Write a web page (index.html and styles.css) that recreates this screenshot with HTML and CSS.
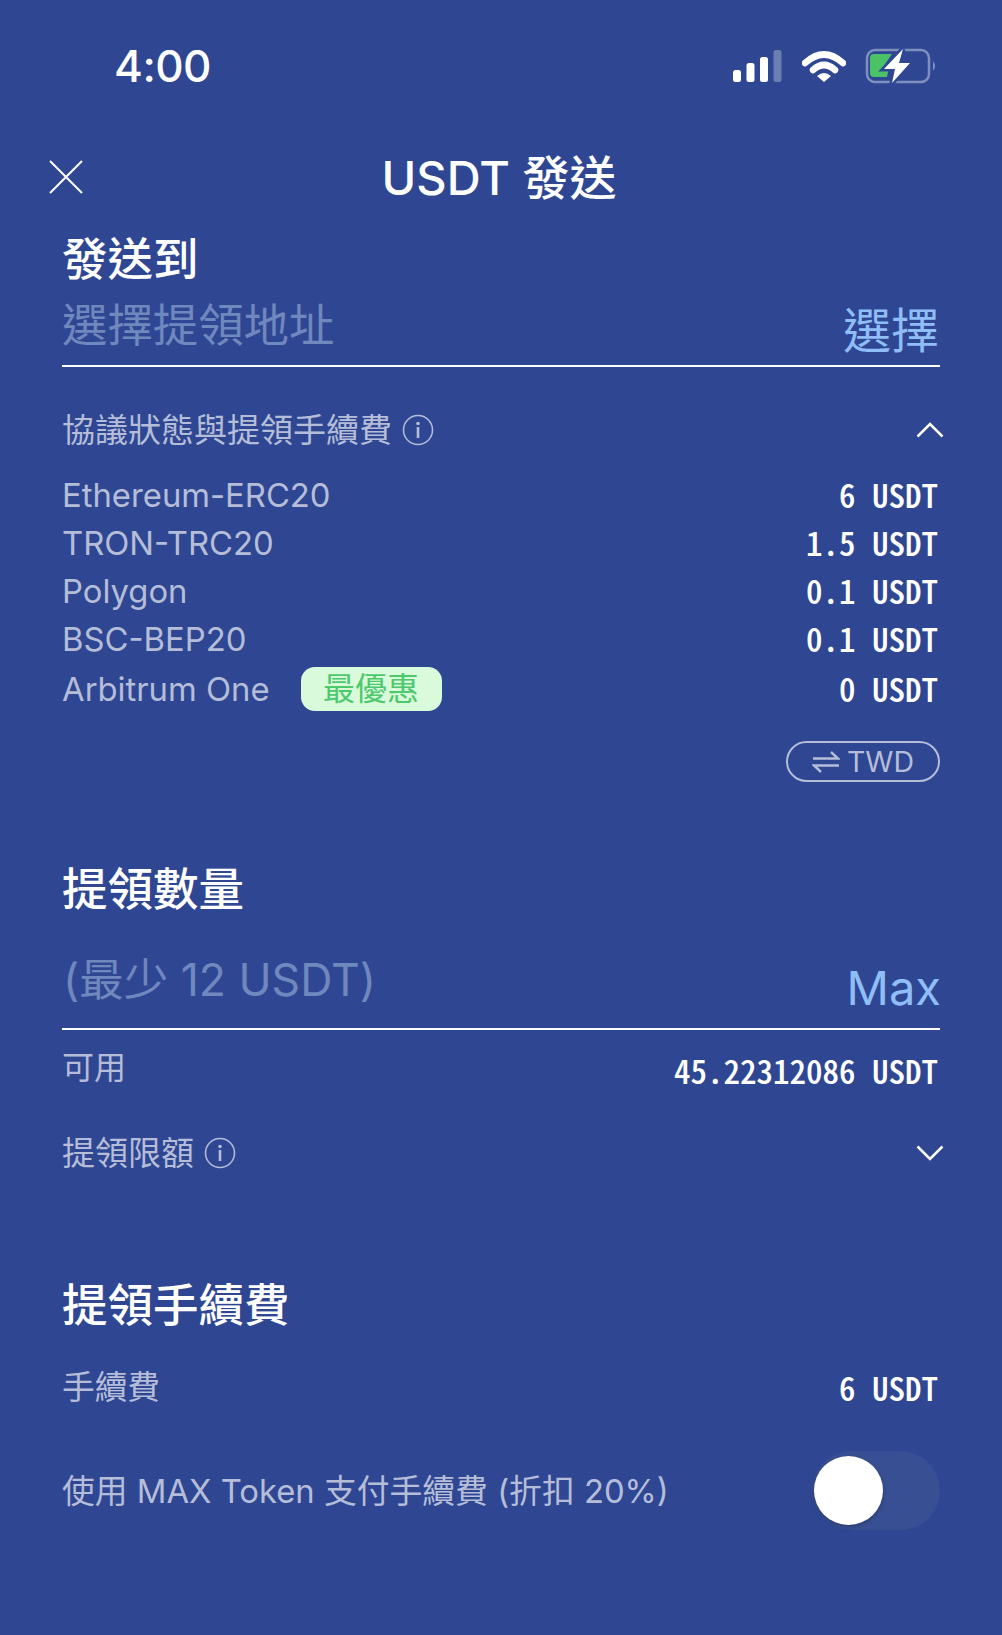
FILE: index.html
```
<!DOCTYPE html>
<html lang="zh-Hant">
<head>
<meta charset="utf-8">
<title>USDT 發送</title>
<link rel="stylesheet" href="styles.css">
</head>
<body>
<div class="screen">
  <header class="status">
    <span class="time">4:00</span>
    <div class="status-icons">
      <svg class="ic-signal" viewBox="0 0 50 32"><rect x="0" y="20" width="8" height="12" rx="2.5" fill="#fff"/><rect x="13.500" y="13" width="8" height="19" rx="2.500" fill="#fff"/><rect x="27" y="7" width="8" height="25" rx="2.500" fill="#fff"/><rect x="40.500" y="0" width="8" height="32" rx="2.500" fill="#6b7fb3"/></svg>
      <svg class="ic-wifi" viewBox="0 0 44 32"><path d="M3 13 Q22 -4 41 13" fill="none" stroke="#fff" stroke-width="6.500" stroke-linecap="round"/><path d="M11 20 Q22 10 33 20" fill="none" stroke="#fff" stroke-width="6.500" stroke-linecap="round"/><path d="M15 26 Q22 20 29 26 L22 32Z" fill="#fff"/></svg>
      <svg class="ic-battery" viewBox="0 0 72 36"><rect x="2" y="2" width="62" height="32" rx="8" fill="none" stroke="#7f90bf" stroke-width="2.500"/><path d="M68 13 Q72 18 68 23Z" fill="#7f90bf"/><path d="M5 10 Q5 6 9 6 H27 L18 19 H24 L22 29 H9 Q5 29 5 25Z" fill="#4cc266"/><path d="M38 1 L19 21 H30 L27 35 L45 15 H34Z" fill="#fff" stroke="#2f4793" stroke-width="5" paint-order="stroke"/></svg>
    </div>
  </header>

  <div class="nav">
    <svg class="ic-close" viewBox="0 0 34 34"><path d="M1 1 L33 33 M33 1 L1 33" stroke="#fff" stroke-width="2" fill="none"/></svg>
    <h1 class="nav-title">USDT 發送</h1>
  </div>

  <section class="send-to">
    <h2 class="heading">發送到</h2>
    <div class="field field-address">
      <span class="placeholder">選擇提領地址</span>
      <span class="field-action">選擇</span>
    </div>
  </section>

  <section class="fees">
    <div class="toggle-row">
      <div class="label-with-info">
        <span class="label">協議狀態與提領手續費</span>
        <svg class="ic-info" viewBox="0 0 32 32"><circle cx="16" cy="16" r="14.500" fill="none" stroke="#b5bdd8" stroke-width="1.500"/><circle cx="16" cy="9.500" r="1.800" fill="#b5bdd8"/><rect x="14.700" y="13" width="2.600" height="11" fill="#b5bdd8"/></svg>
      </div>
      <svg class="ic-chevron" viewBox="0 0 28 16"><path d="M1.500 14.500 L14 2 L26.500 14.500" fill="none" stroke="#fff" stroke-width="2.500"/></svg>
    </div>
    <ul class="fee-list">
      <li class="fee-row"><span class="net">Ethereum-ERC20</span><span class="amount">6 USDT</span></li>
      <li class="fee-row"><span class="net">TRON-TRC20</span><span class="amount">1.5 USDT</span></li>
      <li class="fee-row"><span class="net">Polygon</span><span class="amount">0.1 USDT</span></li>
      <li class="fee-row"><span class="net">BSC-BEP20</span><span class="amount">0.1 USDT</span></li>
      <li class="fee-row fee-row-last"><span class="net-group"><span class="net">Arbitrum One</span><span class="badge">最優惠</span></span><span class="amount">0 USDT</span></li>
    </ul>
    <div class="currency-row">
      <div class="currency-btn">
        <svg class="ic-swap" viewBox="0 0 28 22"><path d="M1 7.500 H26 L19 1 M27 14.500 H2 L9 21" fill="none" stroke="#b5bdd8" stroke-width="2.400"/></svg>
        <span>TWD</span>
      </div>
    </div>
  </section>

  <section class="amount-sec">
    <h2 class="heading">提領數量</h2>
    <div class="field field-amount">
      <span class="placeholder placeholder-amount">(最少 12 USDT)</span>
      <span class="field-action">Max</span>
    </div>
    <div class="info-row row-available">
      <span class="label label-short">可用</span>
      <span class="amount">45.22312086 USDT</span>
    </div>
    <div class="toggle-row row-limit">
      <div class="label-with-info">
        <span class="label">提領限額</span>
        <svg class="ic-info" viewBox="0 0 32 32"><circle cx="16" cy="16" r="14.500" fill="none" stroke="#b5bdd8" stroke-width="1.500"/><circle cx="16" cy="9.500" r="1.800" fill="#b5bdd8"/><rect x="14.700" y="13" width="2.600" height="11" fill="#b5bdd8"/></svg>
      </div>
      <svg class="ic-chevron" viewBox="0 0 28 16"><path d="M1.500 1.500 L14 14 L26.500 1.500" fill="none" stroke="#fff" stroke-width="2.500"/></svg>
    </div>
  </section>

  <section class="fee-sec">
    <h2 class="heading">提領手續費</h2>
    <div class="info-row row-fee">
      <span class="label label-fee">手續費</span>
      <span class="amount">6 USDT</span>
    </div>
    <div class="info-row row-token">
      <span class="label label-token">使用 MAX Token 支付手續費 (折扣 20%)</span>
      <div class="switch"><span class="knob"></span></div>
    </div>
  </section>
</div>
</body>
</html>
```

FILE: styles.css
```
* { box-sizing: border-box; }
html, body { margin: 0; padding: 0; background: #2f4793; }
body { font-family: Inter, "Noto Sans CJK TC", sans-serif; }
h1, h2, ul { margin: 0; padding: 0; list-style: none; }

.screen {
  width: 1002px;
  height: 1635px;
  background: #2f4793;
  border-radius: 18px 18px 0 0;
  padding: 0 62px;
  overflow: hidden;
  color: #b5bdd8;
}

.status { display: flex; justify-content: space-between; align-items: center; height: 132px; padding: 0 3px 0 52px; }
.time { color: #fff; font-size: 44px; font-weight: 500; line-height: 1; letter-spacing: -0.5px; }
.status-icons { display: flex; align-items: center; }
.ic-signal { width: 50px; height: 32px; margin-right: 19px; }
.ic-wifi { width: 44px; height: 32px; margin-right: 19px; }
.ic-battery { width: 72px; height: 36px; }

.nav { display: flex; justify-content: center; position: relative; height: 90px; align-items: center; }
.nav-title { color: #fff; font-size: 47px; font-weight: 500; line-height: 1; padding-right: 4px; }
.ic-close { position: absolute; left: -13px; top: 28px; width: 34px; height: 34px; }

.heading { color: #fff; font-size: 45.5px; font-weight: 500; line-height: 56px; font-family: "Noto Sans CJK TC", sans-serif; }
.send-to .heading { margin-top: 6px; }

.field { display: flex; justify-content: space-between; border-bottom: 2px solid #fff; }
.field-address { height: 69px; margin-top: 14px; align-items: flex-start; }
.placeholder { color: #6f88bd; font-size: 45.4px; line-height: 56px; }
.field-action { color: #8fbdf5; font-size: 48px; line-height: 60px; padding-top: 3px; margin-right: 1px; }

.toggle-row { display: flex; justify-content: space-between; align-items: center; }
.label-with-info { display: flex; align-items: center; gap: 10px; }
.label { font-size: 33px; line-height: 40px; }
.label-short { font-size: 32px; }
.label-fee { font-size: 32.7px; }
.label-token { font-size: 32.8px; }
.ic-info { width: 32px; height: 32px; }
.ic-chevron { width: 28px; height: 16px; margin-right: -4px; }

.fees { margin-top: 43px; }
.fee-list { margin-top: 21px; }
.fee-row { display: flex; justify-content: space-between; align-items: center; height: 48px; }
.fee-row-last { margin-top: 2px; }
.net { font-size: 32.8px; line-height: 48px; }
.net-group { display: flex; align-items: center; gap: 31px; }
.badge { background: #d9fbdc; color: #4cc96b; font-size: 32px; line-height: 44px; height: 44px; width: 141px; text-align: center; border-radius: 14px; }
.amount { color: #fff; font-family: "Noto Sans CJK TC", sans-serif; font-feature-settings: "hwid"; font-size: 33px; font-weight: 500; line-height: 48px; margin-right: 2px; white-space: pre; }
.fee-row .amount { padding-bottom: 3px; }
.row-available .amount { padding-top: 4px; }

.currency-row { display: flex; justify-content: flex-end; margin-top: 28px; }
.currency-btn { display: flex; align-items: center; justify-content: center; gap: 7px; width: 154px; height: 41px; border: 2px solid #b5bdd8; border-radius: 21px; font-size: 28.5px; }
.ic-swap { width: 28px; height: 22px; }

.amount-sec { margin-top: 76px; }
.field-amount { height: 109px; margin-top: 7px; align-items: flex-start; }
.placeholder-amount { padding: 31px 0 0 1px; font-size: 44.5px; }
.field-amount .field-action { padding-top: 37px; margin-right: -1px; font-size: 47px; }
.info-row { display: flex; justify-content: space-between; align-items: center; }
.row-available { margin-top: 14px; height: 48px; }
.row-limit { margin-top: 41px; }

.fee-sec { margin-top: 101px; }
.row-fee { margin-top: 33px; height: 48px; }
.row-token { margin-top: 40px; }
.switch { width: 128px; height: 79px; border-radius: 40px; background: #384f93; padding: 5px 0 0 2px; }
.knob { display: block; width: 69px; height: 69px; border-radius: 50%; background: #fff; box-shadow: 0 2px 4px rgba(0, 0, 0, 0.25); }
```
